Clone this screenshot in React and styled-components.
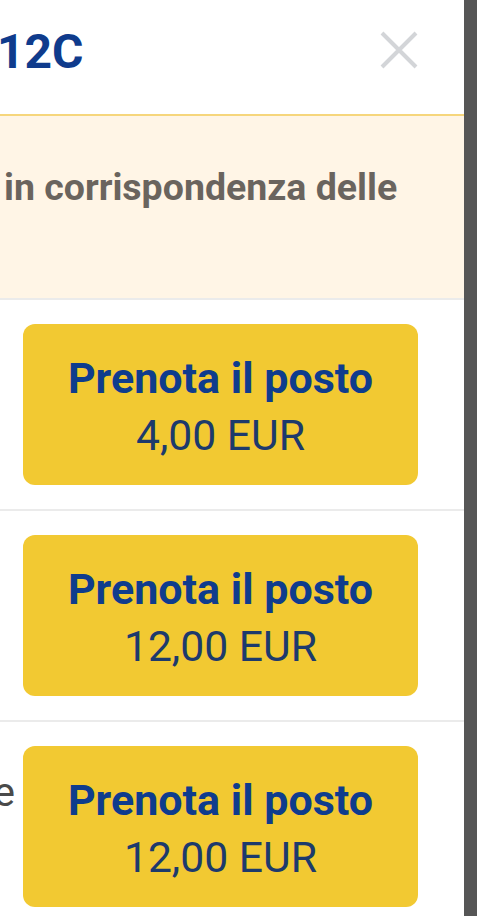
import React from "react";
import styled, { createGlobalStyle } from "styled-components";

const GlobalStyle = createGlobalStyle`
  html, body {
    margin: 0;
    padding: 0;
    background: #565656;
  }
  body {
    font-family: Roboto, "Liberation Sans", Arial, sans-serif;
  }
`;

const seats = [
  { id: 1, label: "", price: "4,00 EUR" },
  { id: 2, label: "", price: "12,00 EUR" },
  { id: 3, label: "e", price: "12,00 EUR" }
];

const App = () => {
  return (
    <>
      <GlobalStyle />
      <Screen>
        <Panel>
          <Header>
            <Title>12C</Title>
            <CloseButton aria-label="Chiudi">
              <svg width="38" height="38" viewBox="0 0 38 38">
                <path
                  d="M2 2 L36 36 M36 2 L2 36"
                  stroke="#d3d5d8"
                  strokeWidth="4"
                  fill="none"
                />
              </svg>
            </CloseButton>
          </Header>
          <Notice>in corrispondenza delle</Notice>
          {seats.map((seat) => (
            <Row key={seat.id}>
              <Label>
                <span>{seat.label}</span>
              </Label>
              <BookButton>
                <BookTitle>Prenota il posto</BookTitle>
                <BookPrice>{seat.price}</BookPrice>
              </BookButton>
            </Row>
          ))}
        </Panel>
        <Sidebar />
      </Screen>
    </>
  );
};

const Screen = styled.div`
  display: flex;
  height: 916px;
  overflow: hidden;
`;

const Panel = styled.div`
  flex: 1;
  min-width: 0;
  background: #ffffff;
  display: flex;
  flex-direction: column;

  & > * {
    flex-shrink: 0;
  }
`;

const Sidebar = styled.div`
  width: 13px;
  background: #565656;
`;

const Header = styled.div`
  height: 114px;
  display: flex;
  align-items: flex-start;
  justify-content: space-between;
  padding-right: 46px;
  box-sizing: border-box;
`;

const Title = styled.h2`
  margin: 28px 0 0 -3px;
  font-size: 48px;
  line-height: 48px;
  font-weight: 700;
  color: #0f3b8c;
`;

const CloseButton = styled.button`
  margin-top: 31px;
  padding: 0;
  border: none;
  background: none;
  display: flex;
  cursor: pointer;
`;

const Notice = styled.div`
  height: 184px;
  box-sizing: border-box;
  border-top: 2px solid #f6d67c;
  background: #fff5e6;
  padding: 46px 0 0 4px;
  font-size: 37.5px;
  line-height: 50px;
  font-weight: 700;
  color: #6a645e;
  white-space: nowrap;
`;

const Row = styled.div`
  display: flex;
  align-items: flex-start;
  border-top: 2px solid #ebebeb;
  padding: 24px 46px 24px 0;
`;

const Label = styled.div`
  flex: 1;
  min-width: 0;
  display: flex;
  justify-content: flex-end;
  overflow: hidden;
  padding-top: 22px;
  font-size: 41px;
  line-height: 48px;
  color: #4a4a4a;
  white-space: nowrap;

  span {
    padding-right: 8px;
  }
`;

const BookButton = styled.button`
  width: 395px;
  flex-shrink: 0;
  box-sizing: border-box;
  padding: 26px 0 21px;
  border: none;
  border-radius: 12px;
  background: #f2c932;
  display: flex;
  flex-direction: column;
  align-items: center;
  font-family: Roboto, "Liberation Sans", Arial, sans-serif;
  cursor: pointer;
`;

const BookTitle = styled.span`
  font-size: 43px;
  line-height: 57px;
  font-weight: 700;
  color: #0f3c8d;
`;

const BookPrice = styled.span`
  font-size: 42.7px;
  line-height: 57px;
  font-weight: 400;
  color: #1d3a6c;
`;

export default App;
